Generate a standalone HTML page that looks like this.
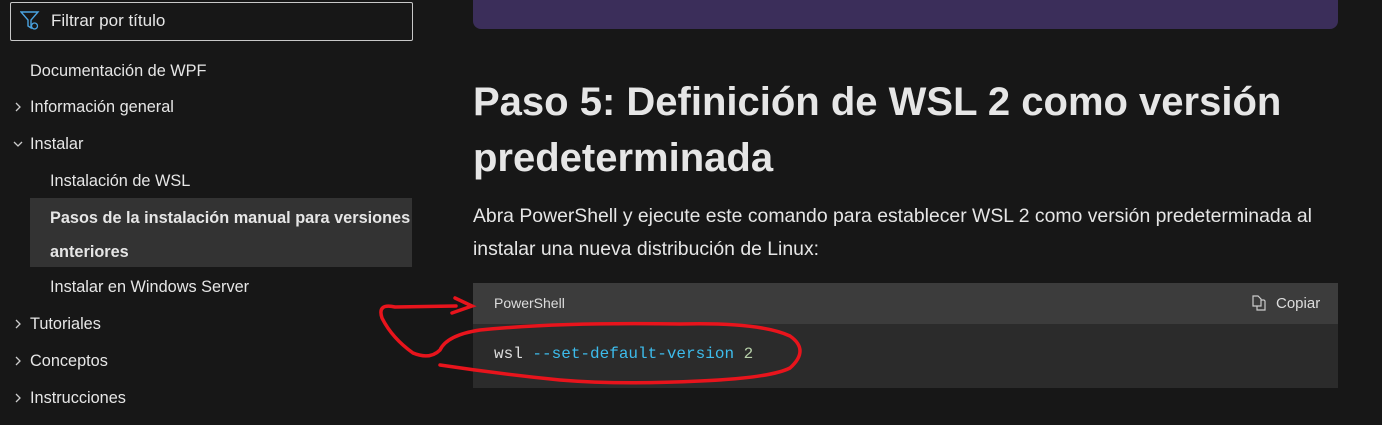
<!DOCTYPE html><html><head><style>
body{margin:0;width:1382px;height:425px;background:#171717;overflow:hidden;font-family:"Liberation Sans",sans-serif;color:#e6e6e6;position:relative}
.a{position:absolute;white-space:nowrap}
.nav{font-size:16.3px;color:#e6e6e6}
</style></head><body>
<div class="a" style="left:10px;top:2px;width:401px;height:37px;border:1px solid #c8c8c8;border-radius:2px"></div>
<svg class="a" style="left:20px;top:11px" width="22" height="20" viewBox="0 0 22 20"><path d="M1 1H18L11 9V17L8 15V9Z" fill="none" stroke="#4aa3e0" stroke-width="1.4"/><circle cx="14.5" cy="15" r="3" fill="none" stroke="#4aa3e0" stroke-width="1.3"/></svg>
<div class="a nav" style="left:51px;top:11px;font-size:17px">Filtrar por título</div>
<div class="a nav" style="left:30px;top:62px">Documentación de WPF</div>
<svg class="a" style="left:0;top:0" width="30" height="425"><g fill="none" stroke="#ccc" stroke-width="1.3"><path d="M16 103l4 4-4 4"/><path d="M14 142l4 4 4-4"/><path d="M16 320l4 4-4 4"/><path d="M16 357l4 4-4 4"/><path d="M16 394l4 4-4 4"/></g></svg>
<div class="a nav" style="left:30px;top:98px">Información general</div>
<div class="a nav" style="left:30px;top:135px">Instalar</div>
<div class="a nav" style="left:50px;top:172px">Instalación de WSL</div>
<div class="a" style="left:30px;top:198px;width:382px;height:69px;background:#333"></div>
<div class="a nav" style="left:50px;top:201px;font-weight:bold;line-height:34px">Pasos de la instalación manual para versiones<br>anteriores</div>
<div class="a nav" style="left:50px;top:278px">Instalar en Windows Server</div>
<div class="a nav" style="left:30px;top:315px">Tutoriales</div>
<div class="a nav" style="left:30px;top:352px">Conceptos</div>
<div class="a nav" style="left:30px;top:389px">Instrucciones</div>

<div class="a" style="left:473px;top:-10px;width:865px;height:39px;background:#3b2e5a;border-radius:8px"></div>
<div class="a" style="left:473px;top:74px;font-size:40px;font-weight:bold;line-height:56px;color:#e6e6e6">Paso 5: Definición de WSL 2 como versión<br>predeterminada</div>
<div class="a" style="left:473px;top:200px;font-size:19.4px;line-height:33px;color:#e6e6e6">Abra PowerShell y ejecute este comando para establecer WSL 2 como versión predeterminada al<br>instalar una nueva distribución de Linux:</div>
<div class="a" style="left:473px;top:283px;width:865px;height:41px;background:#3c3c3c"></div>
<div class="a" style="left:473px;top:324px;width:865px;height:64px;background:#2b2b2b"></div>
<div class="a" style="left:494px;top:295px;font-size:14px;color:#ddd">PowerShell</div>
<svg class="a" style="left:1251px;top:295px" width="16" height="16" viewBox="0 0 16 16"><path d="M2 1h5l3 3v7H2z M10 5h3l1 1v9H6v-4" fill="none" stroke="#ccc" stroke-width="1.2"/></svg>
<div class="a" style="left:1276px;top:295px;font-size:15px;color:#ddd">Copiar</div>
<div class="a" style="left:494px;top:345px;font-family:'Liberation Mono',monospace;font-size:16px;color:#ddd">wsl <span style="color:#3dbcec">--set-default-version</span> <span style="color:#b5cea8">2</span></div>
<svg class="a" style="left:0;top:0" width="1382" height="425"><g fill="none" stroke="#e8141c" stroke-width="3.5" stroke-linecap="round">
<path d="M456 306L395 307Q377 303 382 318Q392 338 413 353Q430 360 440 350Q447 335 480 330Q560 322 680 324Q760 322 790 336Q810 350 790 368Q770 378 700 381Q620 385 560 380Q500 374 440 365"/>
<path d="M455 298L472 306L452 313"/></g></svg>
</body></html>
